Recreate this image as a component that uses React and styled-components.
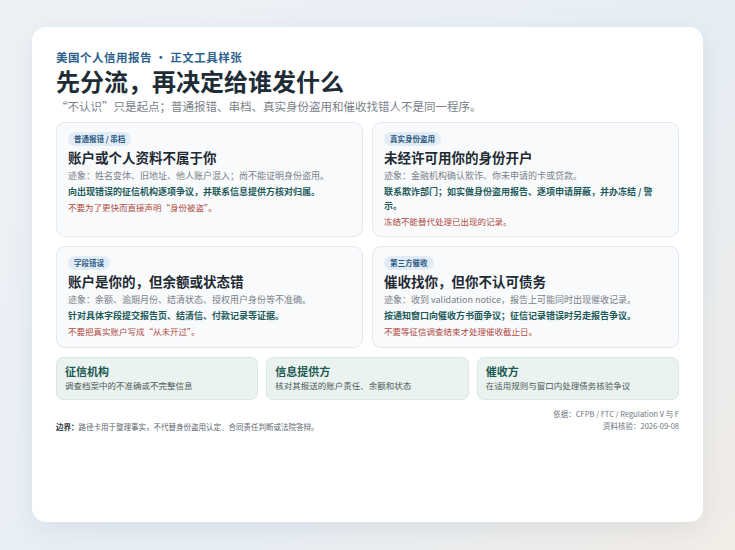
import styled, { createGlobalStyle } from "styled-components";

const GlobalStyle = createGlobalStyle`
  html, body { margin: 0; padding: 0; }
  body {
    width: 735px;
    height: 550px;
    background: linear-gradient(135deg, #eef2f6 0%, #e6edf4 60%, #f1ece6 100%);
    font-family: "Noto Sans CJK SC", "Noto Sans", sans-serif;
  }
`;

const cases = [
  {
    tag: "普通报错 / 串档",
    title: "账户或个人资料不属于你",
    sign: "迹象：姓名变体、旧地址、他人账户混入；尚不能证明身份盗用。",
    act: "向出现错误的征信机构逐项争议，并联系信息提供方核对归属。",
    warn: "不要为了更快而直接声明“身份被盗”。",
  },
  {
    tag: "真实身份盗用",
    title: "未经许可用你的身份开户",
    sign: "迹象：金融机构确认欺诈、你未申请的卡或贷款。",
    act: "联系欺诈部门；如实做身份盗用报告、逐项申请屏蔽，并办冻结 / 警示。",
    warn: "冻结不能替代处理已出现的记录。",
  },
  {
    tag: "字段错误",
    title: "账户是你的，但余额或状态错",
    sign: "迹象：余额、逾期月份、结清状态、授权用户身份等不准确。",
    act: "针对具体字段提交报告页、结清信、付款记录等证据。",
    warn: "不要把真实账户写成“从未开过”。",
  },
  {
    tag: "第三方催收",
    title: "催收找你，但你不认可债务",
    sign: "迹象：收到 validation notice，报告上可能同时出现催收记录。",
    act: "按通知窗口向催收方书面争议；征信记录错误时另走报告争议。",
    warn: "不要等征信调查结束才处理催收截止日。",
  },
];

const roles = [
  { name: "征信机构", desc: "调查档案中的不准确或不完整信息" },
  { name: "信息提供方", desc: "核对其报送的账户责任、余额和状态" },
  { name: "催收方", desc: "在适用规则与窗口内处理债务核验争议" },
];

const App = () => (
  <Page>
    <GlobalStyle />
    <Sheet>
      <Eyebrow>美国个人信用报告 · 正文工具样张</Eyebrow>
      <Title>先分流，再决定给谁发什么</Title>
      <Subtitle>“不认识”只是起点；普通报错、串档、真实身份盗用和催收找错人不是同一程序。</Subtitle>
      <CaseGrid>
        {cases.map((c) => (
          <CaseCard key={c.tag}>
            <Tag>{c.tag}</Tag>
            <CaseTitle>{c.title}</CaseTitle>
            <Sign>{c.sign}</Sign>
            <Action>{c.act}</Action>
            <Warn>{c.warn}</Warn>
          </CaseCard>
        ))}
      </CaseGrid>
      <RoleRow>
        {roles.map((r) => (
          <RoleCard key={r.name}>
            <RoleName>{r.name}</RoleName>
            <RoleDesc>{r.desc}</RoleDesc>
          </RoleCard>
        ))}
      </RoleRow>
      <Footer>
        <Note><b>边界：</b>路径卡用于整理事实，不代替身份盗用认定、合同责任判断或法院答辩。</Note>
        <Source>
          依据：CFPB / FTC / Regulation V 与 F
          <br />
          资料核验：2026-09-08
        </Source>
      </Footer>
    </Sheet>
  </Page>
);

export default App;

const Page = styled.div`
  padding: 27px 32px 28px 32px;
`;

const Sheet = styled.div`
  background: #ffffff;
  border-radius: 14px;
  box-shadow: 0 6px 24px rgba(40, 60, 90, 0.08);
  height: 495px;
  box-sizing: border-box;
  padding: 22px 24px 0 24px;
  display: flex;
  flex-direction: column;
`;

const Eyebrow = styled.div`
  font-size: 11.5px;
  font-weight: 700;
  color: #2d5f8c;
  letter-spacing: 0.5px;
  line-height: 16px;
`;

const Title = styled.h1`
  margin: 1px 0 0;
  font-size: 24px;
  font-weight: 700;
  color: #1e2c36;
  line-height: 30px;
`;

const Subtitle = styled.div`
  font-size: 11.5px;
  color: #7a828a;
  line-height: 15px;
  margin-top: 3px;
`;

const CaseGrid = styled.div`
  margin-top: 8px;
  display: grid;
  grid-template-columns: 1fr 1fr;
  grid-template-rows: 115px 102px;
  gap: 9px 9px;
`;

const CaseCard = styled.div`
  background: #f8fafc;
  border: 1px solid #e3e8ee;
  border-radius: 9px;
  padding: 9px 11px;
  display: flex;
  flex-direction: column;
  align-items: flex-start;
`;

const Tag = styled.span`
  background: #e2ecf6;
  color: #2d5a82;
  font-size: 7.5px;
  font-weight: 600;
  padding: 2px 6px;
  border-radius: 8px;
  line-height: 10px;
`;

const CaseTitle = styled.div`
  font-size: 13.5px;
  font-weight: 700;
  color: #1f2a33;
  margin-top: 2px;
  line-height: 18px;
`;

const Sign = styled.div`
  font-size: 9px;
  color: #7a8088;
  margin-top: 3px;
  line-height: 13px;
`;

const Action = styled.div`
  font-size: 9px;
  font-weight: 700;
  color: #1f5a5a;
  margin-top: 3px;
  line-height: 14px;
`;

const Warn = styled.div`
  font-size: 8.5px;
  color: #b0493c;
  margin-top: 2px;
  line-height: 13px;
`;

const RoleRow = styled.div`
  margin-top: 9px;
  display: grid;
  grid-template-columns: repeat(3, 1fr);
  gap: 8px;
`;

const RoleCard = styled.div`
  background: #eaf3f0;
  border: 1px solid #dbe9e4;
  border-radius: 7px;
  height: 43px;
  box-sizing: border-box;
  padding: 5px 8px;
`;

const RoleName = styled.div`
  font-size: 11px;
  font-weight: 700;
  color: #1f5a50;
  line-height: 16px;
`;

const RoleDesc = styled.div`
  font-size: 8.5px;
  color: #4c5a58;
  line-height: 13px;
`;

const Footer = styled.div`
  margin-top: 8px;
  display: flex;
  justify-content: space-between;
  align-items: flex-end;
`;

const Note = styled.div`
  font-size: 7.5px;
  color: #5c6670;
  b { color: #2a3640; }
`;

const Source = styled.div`
  font-size: 7.5px;
  color: #6c757d;
  text-align: right;
  line-height: 12px;
`;
